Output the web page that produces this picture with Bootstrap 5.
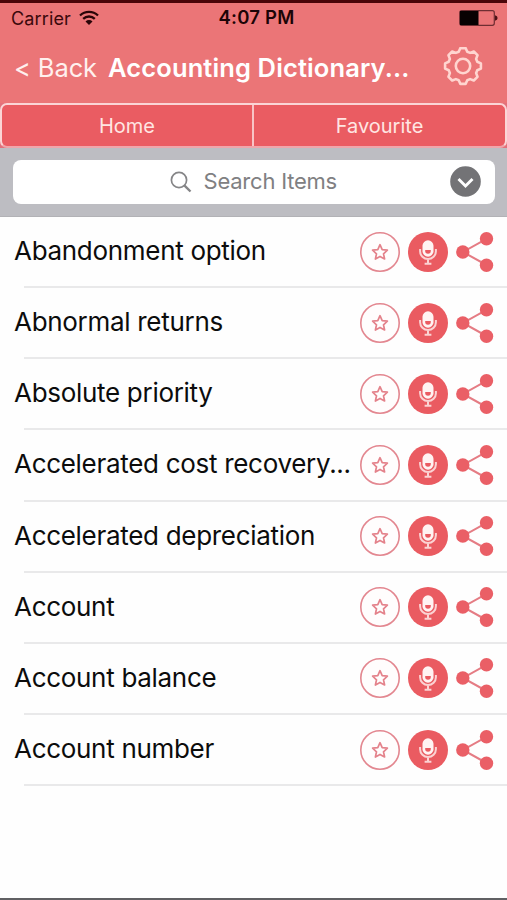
<!DOCTYPE html>
<html lang="en">
<head>
<meta charset="utf-8">
<meta name="viewport" content="width=device-width, initial-scale=1">
<title>Accounting Dictionary</title>
<link href="https://cdn.jsdelivr.net/npm/bootstrap@5.3.0/dist/css/bootstrap.min.css" rel="stylesheet">
<style>
  body { font-family: Inter, "Liberation Sans", sans-serif; background: #fefefe; color: #0c0c0c; height: 900px; overflow: hidden; border-bottom: 2px solid #606063; }
  svg { display: block; flex: none; }
  .top-area { background: #eb7577; border-top: 3px solid #4a0509; height: 103px; }
  .status { height: 30px; padding: 0 9px 0 11px; font-size: 18px; color: #3a080c; }
  .carrier { letter-spacing: .15px; }
  .status .clock { color: #1c0406; font-size: 18.500px; letter-spacing: .25px; padding-left: 4px; }
  .title-bar { height: 70px; padding: 0 24px 2px 14px; color: #fff; font-size: 25.5px; }
  .nav-text { padding-top: 3px; }
  .back { color: #fff0ee; letter-spacing: -.1px; }
  .title-text { font-weight: 600; margin-left: 11px; letter-spacing: .12px; }
  .tabs-wrap { background: #e2707a; height: 45px; }
  .tab-pair { border: 2px solid #fbd5d6; border-bottom-color: #efa6ab; border-radius: 7px; background: #ea5c62; overflow: hidden; height: 45px; }
  .tab-pair a { color: #ffe6e3; font-size: 20px; text-decoration: none; }
  .tab-pair a:first-child { flex: 0 0 250px; }
  .tab-pair a + a { border-left: 2px solid #f8c4c6; }
  .search-area { background: #bdbdc2; height: 69px; padding: 12px 12.5px; border-bottom: 1px solid #b2b2b6; }
  .search-box { background: #fff; border-radius: 8px; height: 44px; color: #808082; font-size: 22px; padding: 0 14px 1px 157px; }
  .search-label { letter-spacing: -.22px; }
  .term { height: 71.15px; padding: 0 13px 2px 14px; font-size: 26px; }
  .term::after { content: ""; position: absolute; left: 24px; right: 0; bottom: 0; height: 2px; background: #e9e9ea; }
  .term-name { margin-top: -2px; letter-spacing: -.3px; }
  .term-actions { gap: 8px; }
</style>
</head>
<body>
<svg width="0" height="0" class="position-absolute" aria-hidden="true">
  <defs>
    <symbol id="star" viewBox="0 0 40 40">
      <circle cx="20" cy="20" r="19.2" fill="#fffdfd" stroke="#e38790" stroke-width="1.6"/>
      <path d="M20 12.700l2.200 4.900 5.200.6-3.900 3.600 1.100 5.200-4.600-2.600-4.600 2.600 1.100-5.200-3.900-3.600 5.200-.6z" fill="none" stroke="#e4828b" stroke-width="1.700" stroke-linejoin="round"/>
    </symbol>
    <symbol id="mic" viewBox="0 0 40 40">
      <circle cx="20" cy="20" r="20" fill="#ea5b61"/>
      <rect x="14.500" y="8.300" width="11" height="16.400" rx="5.500" fill="#fff3f2"/>
      <path d="M17.200 18h5.600v1a2.800 2.800 0 0 1-5.600 0z" fill="#ea5b61"/>
      <path d="M12.100 17v2.200a7.900 7.900 0 0 0 15.800 0V17M20 27v4.500M16.600 31.700h6.800" fill="none" stroke="#fbd3d3" stroke-width="2"/>
    </symbol>
    <symbol id="share" viewBox="0 0 38 40">
      <path d="M30.5 6.800L7 20l23.500 13" fill="none" stroke="#e57c84" stroke-width="2"/>
      <circle cx="30.500" cy="6.800" r="6.700" fill="#ea5f66"/>
      <circle cx="6.800" cy="20" r="6.700" fill="#ea5f66"/>
      <circle cx="30.500" cy="33.200" r="6.700" fill="#ea5f66"/>
    </symbol>
  </defs>
</svg>

<header class="top-area">
  <div class="status row g-0 align-items-center">
    <div class="col d-flex align-items-center">
      <span class="carrier">Carrier</span>
      <svg class="ms-2" width="20" height="16" viewBox="0 0 20 16" fill="none" stroke="#2a0508" stroke-width="2.300"><path d="M1 5.500a13 13 0 0 1 18 0M4.200 8.800a8.400 8.400 0 0 1 11.600 0"/><path d="M10 15l-3.500-3.600a5 5 0 0 1 7 0z" fill="#2a0508" stroke="none"/></svg>
    </div>
    <div class="col-auto clock fw-semibold">4:07 PM</div>
    <div class="col d-flex justify-content-end">
      <svg width="39" height="16" viewBox="0 0 39 16"><rect x=".7" y=".7" width="34.600" height="14.600" rx="2" fill="none" stroke="#6f2e32" stroke-width="1.200"/><path d="M1 1h18.500v14H1z" fill="#080102"/><path d="M36 5.300q2.600.6 2.600 2.700T36 10.700z" fill="#4c1115"/></svg>
    </div>
  </div>
  <nav class="title-bar d-flex align-items-center">
    <span class="nav-text back text-nowrap">&lt; Back</span>
    <span class="nav-text title-text text-nowrap">Accounting Dictionary...</span>
    <svg class="ms-auto" width="40" height="40" viewBox="-20 -19 40 40" fill="none" stroke="#ffd5d0" stroke-width="2.600" stroke-linejoin="round"><circle r="7.200"/><path d="M-2.600-17.900H2.600L4.300-14.300 7.100-13.150 10.800-14.500 14.500-10.800 13.150-7.100 14.300-4.300 17.900-2.600V2.600L14.300 4.300 13.150 7.100 14.500 10.800 10.800 14.500 7.100 13.150 4.300 14.300 2.600 17.900H-2.600L-4.300 14.300-7.100 13.150-10.800 14.500-14.500 10.800-13.150 7.100-14.300 4.300-17.900 2.600V-2.600L-14.300-4.300-13.150-7.100-14.500-10.800-10.800-14.500-7.100-13.150-4.300-14.300z"/></svg>
  </nav>
</header>

<div class="tabs-wrap">
  <div class="tab-pair d-flex">
    <a href="#" class="d-flex align-items-center justify-content-center">Home</a>
    <a href="#" class="flex-grow-1 d-flex align-items-center justify-content-center">Favourite</a>
  </div>
</div>

<div class="search-area">
  <div class="search-box d-flex align-items-center">
    <svg width="22" height="22" viewBox="0 0 22 22" fill="none" stroke="#858587"><circle cx="9" cy="9" r="7.600" stroke-width="1.700"/><path d="M14.300 14.300l6.200 6.200" stroke-width="2.400"/></svg>
    <span class="search-label ms-2 ps-1">Search Items</span>
    <svg class="ms-auto" width="31" height="31" viewBox="0 0 31 31"><circle cx="15.500" cy="15.500" r="15.300" fill="#737376"/><path d="M8.500 13l7 7 7-7" fill="none" stroke="#fff" stroke-width="2.900"/></svg>
  </div>
</div>

<main id="terms"></main>

<script>
  const terms = ["Abandonment option", "Abnormal returns", "Absolute priority", "Accelerated cost recovery...", "Accelerated depreciation", "Account", "Account balance", "Account number"];
  document.getElementById("terms").innerHTML = terms.map(t => `
    <div class="term position-relative d-flex align-items-center">
      <span class="term-name flex-grow-1 text-nowrap">${t}</span>
      <div class="term-actions d-flex align-items-center">
        <svg width="40" height="40"><use href="#star"/></svg>
        <svg width="40" height="40"><use href="#mic"/></svg>
        <svg width="38" height="40"><use href="#share"/></svg>
      </div>
    </div>`).join("");
</script>
<script src="https://cdn.jsdelivr.net/npm/bootstrap@5.3.0/dist/js/bootstrap.bundle.min.js"></script>
</body>
</html>
